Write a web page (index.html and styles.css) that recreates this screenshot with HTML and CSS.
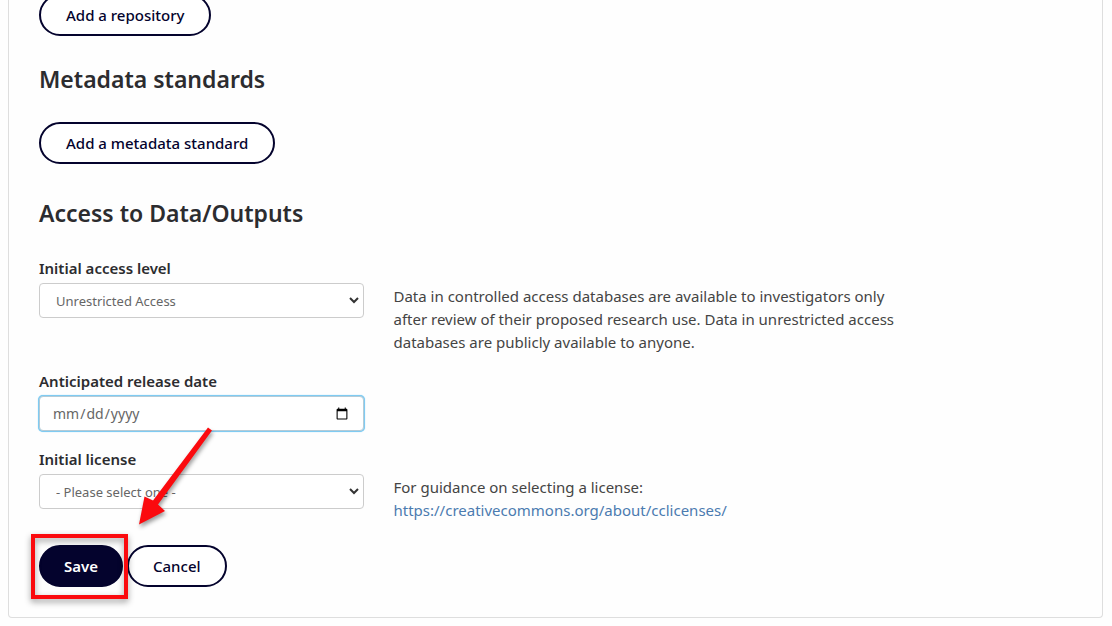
FILE: index.html
```html
<!DOCTYPE html>
<html lang="en-US">
<head>
<meta charset="utf-8">
<title>Research outputs</title>
<link rel="stylesheet" href="styles.css">
</head>
<body>
<main class="panel">
  <button type="button" class="btn btn-wide">Add a repository</button>
  <h2 class="heading">Metadata standards</h2>
  <button type="button" class="btn btn-wide">Add a metadata standard</button>
  <h2 class="heading heading-access">Access to Data/Outputs</h2>
  <form class="form">
    <div class="row row-access">
      <div class="field">
        <label class="label" for="access">Initial access level</label>
        <div class="select-wrap">
          <select class="control select" id="access"><option>Unrestricted Access</option></select>
          <svg class="chevron" viewBox="0 0 10 7" aria-hidden="true"><path d="M1 1l4 4 4-4"/></svg>
        </div>
      </div>
      <p class="help">Data in controlled access databases are available to investigators only after review of their proposed research use. Data in unrestricted access databases are publicly available to anyone.</p>
    </div>
    <div class="row row-date">
      <div class="field">
        <label class="label" for="release">Anticipated release date</label>
        <input class="control date" type="date" id="release">
      </div>
    </div>
    <div class="row">
      <div class="field">
        <label class="label" for="license">Initial license</label>
        <div class="select-wrap">
          <select class="control select" id="license"><option>- Please select one -</option></select>
          <svg class="chevron" viewBox="0 0 10 7" aria-hidden="true"><path d="M1 1l4 4 4-4"/></svg>
        </div>
      </div>
      <p class="help">For guidance on selecting a license:<br><a class="link" href="https://creativecommons.org/about/cclicenses/">https://creativecommons.org/about/cclicenses/</a></p>
    </div>
    <div class="actions">
      <div class="save">
        <button type="submit" class="btn btn-primary">Save</button>
        <span class="highlight"></span>
        <svg class="arrow" viewBox="0 0 90 110" aria-hidden="true"><path d="M78 0.500L82 3.500L28 77.500L35 84L9 97.500L14.500 69.500L23 73.500Z"/></svg>
      </div>
      <button type="button" class="btn">Cancel</button>
    </div>
  </form>
</main>
</body>
</html>
```
FILE: styles.css
```css
* { box-sizing: border-box; }
body {
  margin: 0;
  overflow-x: hidden;
  background: #fefefe;
  color: #2c2c2f;
  font-family: "Noto Sans", sans-serif;
  font-size: 15px;
  line-height: 23px;
}
.panel {
  margin: -6px 9px 0 8px;
  padding: 0 30px 30px;
  border: 1px solid #dedede;
  border-top: 0;
  border-radius: 0 0 4px 4px;
}
.btn {
  display: block;
  height: 42px;
  padding: 0 24px;
  border: 2px solid #04032d;
  border-radius: 21px;
  background: #fff;
  color: #04032d;
  font: 500 15px/22px "Noto Sans", sans-serif;
}
.btn-wide { padding: 0 25px; }
.btn-primary {
  padding: 0 23px;
  background: #04032d;
  color: #fff;
  font-weight: 600;
}
.heading {
  margin: 27px 0;
  font-size: 23px;
  font-weight: 600;
  line-height: 32px;
}
.heading-access { margin-top: 33px; }
.row {
  display: grid;
  grid-template-columns: 11fr 23fr;
  column-gap: 30px;
}
.row-access { margin-bottom: 15px; }
.row-date { margin-bottom: 16px; }
.label {
  display: block;
  font-size: 15px;
  font-weight: 600;
  line-height: 24px;
  margin-bottom: 3px;
}
.select-wrap { position: relative; }
.control {
  display: block;
  width: 100%;
  height: 35px;
  border: 1px solid #ccc;
  border-radius: 4px;
  background: #fff;
  color: #666;
  font: 14px/20px "Noto Sans", sans-serif;
}
.select {
  appearance: none;
  padding: 0 30px 0 16px;
  font-size: 13px;
}
.chevron {
  position: absolute;
  right: 5px;
  top: 14px;
  width: 10px;
  height: 7px;
  fill: none;
  stroke: #333;
  stroke-width: 2;
  pointer-events: none;
}
.date {
  padding: 0 12px;
  border-color: #b5cbd6;
  box-shadow: 0 0 0 1px #7fcbf2, 0 0 1px 1px #7fcbf2;
}
.help {
  max-width: 520px;
  margin: 29px 0 0;
  color: #444;
}
.link {
  color: #4b7bb0;
  text-decoration: none;
}
.actions {
  display: flex;
  gap: 4px;
  margin-top: 23px;
}
.save { position: relative; }
.highlight {
  position: absolute;
  inset: -11px -5px -12px -8px;
  border: 4px solid #fb0a0e;
  filter: drop-shadow(0 3px 3px #0006);
  pointer-events: none;
}
.arrow {
  position: absolute;
  left: 91px;
  bottom: 50px;
  width: 90px;
  height: 110px;
  fill: #fb0a0e;
  filter: drop-shadow(1px 3px 2px #0006);
  pointer-events: none;
}
```
